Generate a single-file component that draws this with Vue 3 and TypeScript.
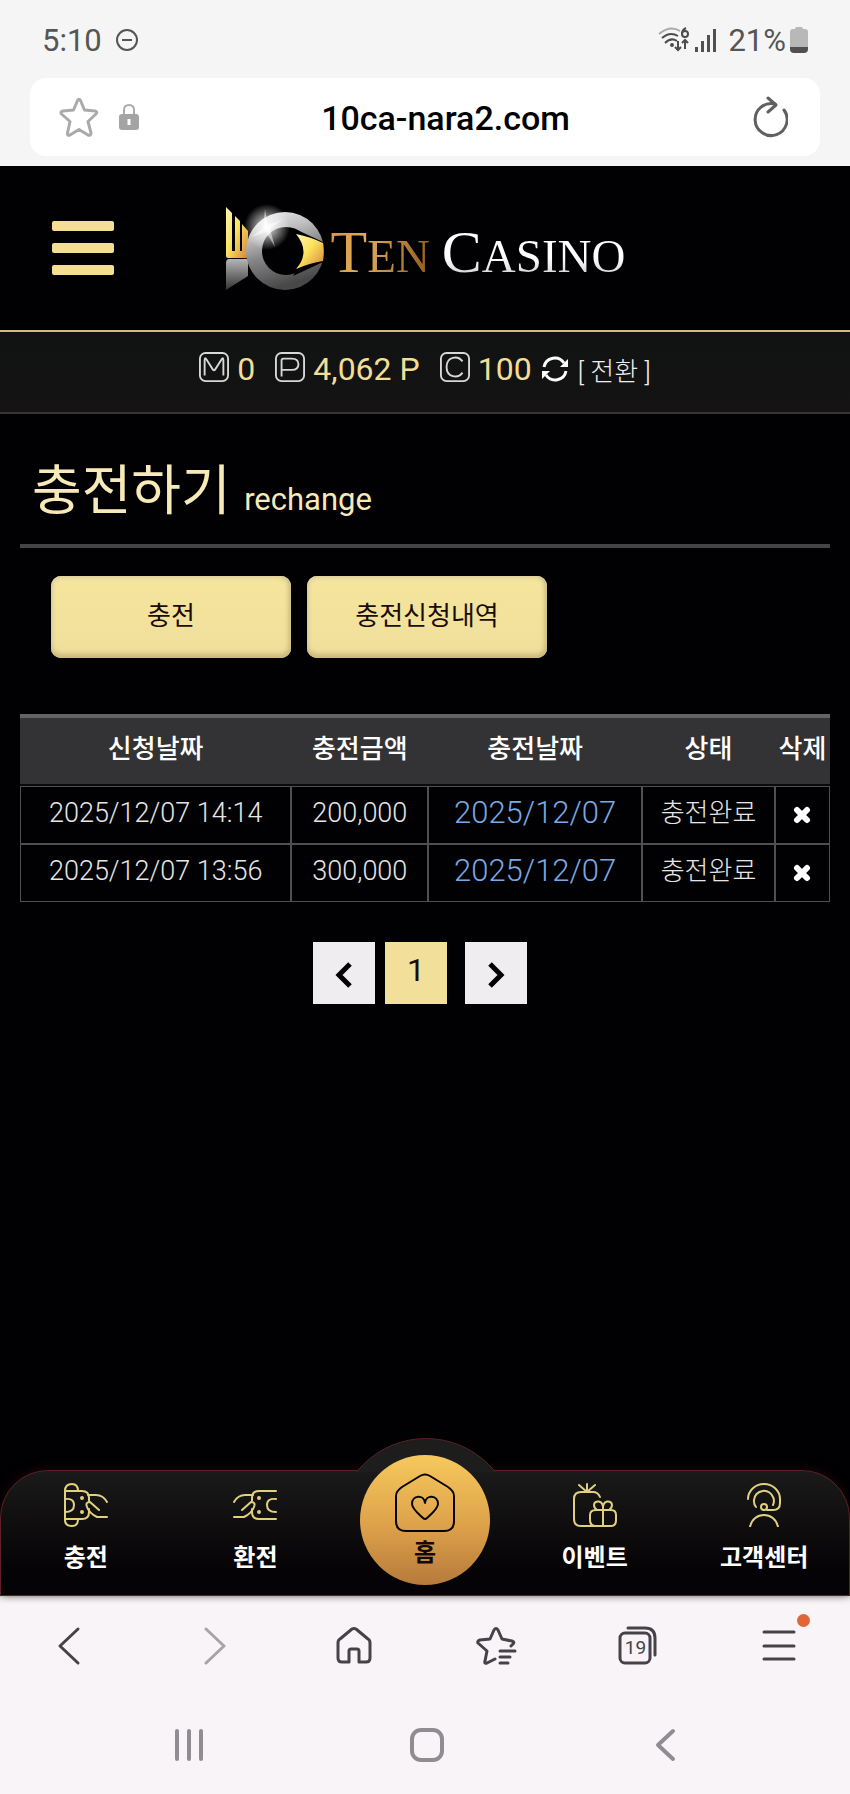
<script setup lang="ts">
import { ref } from 'vue'

interface Deposit {
  requested: string
  amount: string
  credited: string
  status: string
}

const address = ref('10ca-nara2.com')

const balances = [
  { key: 'M', value: '0', label: '머니', glyph: 'M6 25V9Q6 5 8 8L15 19Q16 20 17 19L24 8Q26 5 26 9V25' },
  { key: 'P', value: '4,062 P', label: '포인트', glyph: 'M7 26V9Q7 7 9 7H18Q25 7 25 13Q25 19 18 19H8' },
  { key: 'C', value: '100', label: '콤프', glyph: 'M24 10C19 3 7 5 7 16C7 27 19 29 24 22' },
]

const columns = ['신청날짜', '충전금액', '충전날짜', '상태', '삭제']

const deposits = ref<Deposit[]>([
  { requested: '2025/12/07 14:14', amount: '200,000', credited: '2025/12/07', status: '충전완료' },
  { requested: '2025/12/07 13:56', amount: '300,000', credited: '2025/12/07', status: '충전완료' },
])

function removeDeposit(index: number): void {
  deposits.value.splice(index, 1)
}
</script>

<template>
  <div class="phone">
    <div class="status">
      <div class="status-group">
        <span>5:10</span>
        <svg class="dnd" width="24" height="24" viewBox="0 0 24 24" fill="none" stroke="#555" stroke-width="2">
          <circle cx="12" cy="12" r="10" /><path d="M7 12h10" />
        </svg>
      </div>
      <div class="status-group right">
        <svg width="32" height="26" viewBox="0 0 32 26" fill="none" stroke="#4c4c4c" stroke-width="2">
          <path d="M1 7Q12-2 22 4" stroke="#aaa" />
          <path d="M4 11Q12 4 20 9M7 16Q13 10 19 14" />
          <circle cx="14" cy="18" r="1" fill="#4c4c4c" />
          <path d="M20 14v9m-3-3l3 3 3-3M27 22v-9m-3 3l3-3 3 3" />
          <path d="M28 1Q24 3 24 7" /><circle cx="27" cy="7" r="3" />
        </svg>
        <svg width="24" height="24" viewBox="0 0 24 24" fill="#505050">
          <rect x="1" y="19" width="3" height="5" /><rect x="7" y="13" width="3" height="11" />
          <rect x="13" y="7" width="3" height="17" /><rect x="19" y="1" width="3" height="23" />
        </svg>
        <span class="percent">21%</span>
        <svg width="18" height="26" viewBox="0 0 18 26">
          <path d="M5 2Q5 0 7 0h4q2 0 2 2h2q3 0 3 3v16H0V5q0-3 3-3z" fill="#b8b8b8" />
          <path d="M0 20h18v2q0 4-4 4H4q-4 0-4-4z" fill="#505050" />
        </svg>
      </div>
    </div>

    <div class="address-row">
      <div class="address">
        <button type="button" aria-label="즐겨찾기">
          <svg width="40" height="40" viewBox="0 0 40 40" fill="none" stroke="#aaa" stroke-width="3" stroke-linejoin="round">
            <path d="M18.500 3.500Q20 1 21.500 3.500L25.500 13L36 14Q39 15 37 17L29 24.500L32 36Q32 39 29 38L20 32.500L11 38Q8 39 8.500 36L11 24.500L2.500 17Q1 15 4 14L14.500 13Z" />
          </svg>
        </button>
        <svg class="lock" width="20" height="26" viewBox="0 0 20 26">
          <path d="M5 12V6q0-5 5-5t5 5v6" fill="none" stroke="#aaa" stroke-width="2" />
          <rect y="10" width="20" height="16" rx="3" fill="#a4a4a4" />
          <path d="M10 15v6" stroke="#fff" stroke-width="3" />
        </svg>
        <input v-model="address" type="text" aria-label="주소" />
        <button type="button" aria-label="새로고침">
          <svg width="36" height="42" viewBox="0 0 36 42" fill="none" stroke="#606060" stroke-width="3" stroke-linecap="round" stroke-linejoin="round">
            <path d="M32 14A16 16 0 1 1 23 8" /><path d="M16 2l8 7-8 7" />
          </svg>
        </button>
      </div>
    </div>

    <div class="site">
      <header class="site-header">
        <button class="menu" type="button" aria-label="메뉴"><i></i><i></i><i></i></button>
        <a class="logo" href="#" aria-label="Ten Casino">
          <svg width="100" height="90" viewBox="0 0 100 90">
            <defs>
              <linearGradient id="gold" x1="0" y1="0" x2="1" y2="1">
                <stop offset="0" stop-color="#fff6b0" /><stop offset=".45" stop-color="#fbe45d" /><stop offset="1" stop-color="#d6823b" />
              </linearGradient>
              <linearGradient id="steel" x1="0" y1="0" x2=".3" y2="1">
                <stop offset="0" stop-color="#efefef" /><stop offset=".35" stop-color="#bcbcbc" />
                <stop offset=".6" stop-color="#858585" /><stop offset="1" stop-color="#484848" />
              </linearGradient>
              <linearGradient id="base" x1="0" y1="0" x2="0" y2="1">
                <stop offset="0" stop-color="#b5b5b5" /><stop offset="1" stop-color="#333" />
              </linearGradient>
              <radialGradient id="flare">
                <stop offset="0" stop-color="#fff" /><stop offset=".25" stop-color="#fff" stop-opacity=".7" />
                <stop offset="1" stop-color="#fff" stop-opacity="0" />
              </radialGradient>
            </defs>
            <path d="M1 4L7 10V48H10V13L15 18V48H17V21L23 28V53Q22 56 19 55H3Q1 55 1 53Z" fill="url(#gold)" />
            <path d="M1 60Q1 56 4 56H23V73L1 87Z" fill="url(#base)" />
            <circle cx="60" cy="48" r="39" fill="url(#steel)" />
            <circle cx="61" cy="48" r="24" fill="#010103" />
            <path d="M68 25L98 39V59L68 73Q86 48 68 25Z" fill="#010103" />
            <path d="M71 31Q86 34 98 40Q99 50 98 58Q85 60 71 66Q86 49 71 31Z" fill="url(#gold)" />
            <circle cx="42" cy="24" r="23" fill="url(#flare)" />
            <path d="M40 6L43 22L58 16L45 26L50 44L41 29L26 34L38 25Z" fill="#fff" opacity=".5" />
          </svg>
          <span class="wordmark"><span class="ten">T<small>EN</small></span><span class="casino">C<small>ASINO</small></span></span>
        </a>
      </header>

      <div class="balances">
        <span v-for="b in balances" :key="b.key" class="balance">
          <svg width="30" height="30" viewBox="0 0 32 32" fill="none" stroke="#d8d8d8" stroke-width="2" role="img" :aria-label="b.label">
            <rect x="1" y="1" width="30" height="30" rx="6" /><path :d="b.glyph" />
          </svg>
          <b>{{ b.value }}</b>
        </span>
        <button class="convert" type="button">
          <svg width="26" height="26" viewBox="0 0 26 26" fill="none" stroke="#fff" stroke-width="3">
            <path d="M2 11A11 11 0 0 1 22 7M24 15A11 11 0 0 1 4 19" />
            <path d="M26 3v8h-8zM0 23v-8h8z" fill="#fff" stroke="none" />
          </svg>
          <span>[ 전환 ]</span>
        </button>
      </div>

      <main>
        <h1>충전하기 <small>rechange</small></h1>

        <div class="tabs">
          <button type="button">충전</button>
          <button type="button">충전신청내역</button>
        </div>

        <table>
          <colgroup><col class="c1" /><col class="c2" /><col class="c3" /><col class="c4" /><col class="c5" /></colgroup>
          <thead>
            <tr><th v-for="c in columns" :key="c" scope="col">{{ c }}</th></tr>
          </thead>
          <tbody>
            <tr v-for="(d, i) in deposits" :key="d.requested">
              <td>{{ d.requested }}</td>
              <td>{{ d.amount }}</td>
              <td class="credited">{{ d.credited }}</td>
              <td class="state">{{ d.status }}</td>
              <td>
                <button class="remove" type="button" aria-label="삭제" @click="removeDeposit(i)">
                  <svg width="18" height="18" viewBox="0 0 18 18" stroke="#fff" stroke-width="6" stroke-linecap="round">
                    <path d="M4 4l10 10M14 4L4 14" />
                  </svg>
                </button>
              </td>
            </tr>
          </tbody>
        </table>

        <nav class="pages" aria-label="페이지">
          <button type="button" aria-label="이전">
            <svg width="18" height="26" viewBox="0 0 18 26" fill="none" stroke="#000" stroke-width="5"><path d="M15 2L4 13l11 11" /></svg>
          </button>
          <button class="current" type="button" aria-current="page">1</button>
          <button class="next" type="button" aria-label="다음">
            <svg width="18" height="26" viewBox="0 0 18 26" fill="none" stroke="#000" stroke-width="5"><path d="M3 2l11 11L3 24" /></svg>
          </button>
        </nav>
      </main>

      <nav class="dock" aria-label="주 메뉴">
        <div class="bump"></div>
        <a href="#">
          <svg class="line" width="44" height="44" viewBox="0 0 44 44">
            <path d="M1 8V37Q1 43 8 43Q14 43 14 36M1 8Q1 1 8 1Q14 1 14 8M1 8H18Q25 8 25 15V18M1 36H18Q25 36 25 29V26" />
            <path d="M1 16Q10 15 10 22Q10 29 1 29" />
            <circle cx="18" cy="15" r="1" /><circle cx="18" cy="29" r="1" />
            <path d="M24 12H32Q39 12 43 19M35 27L26 19Q21 19 23 24Q25 30 33 34H43" />
          </svg>
          <span>충전</span>
        </a>
        <a href="#">
          <svg class="line" width="44" height="44" viewBox="0 0 44 44">
            <path d="M43 8H26Q19 8 19 15V18M43 36H26Q19 36 19 29V26M43 16Q34 15 34 22Q34 29 43 29" />
            <circle cx="26" cy="15" r="1" /><circle cx="26" cy="29" r="1" />
            <path d="M20 12H12Q5 12 1 19M9 27L18 19Q23 19 21 24Q19 30 11 34H1" />
          </svg>
          <span>환전</span>
        </a>
        <a class="home" href="#">
          <svg width="60" height="60" viewBox="0 0 60 60" fill="none" stroke="#080400" stroke-width="2" stroke-linejoin="round">
            <path d="M25 3Q30 0 35 3L53 14Q59 18 59 23V48Q59 58 49 58H11Q1 58 1 48V23Q1 18 7 14Z" />
            <path d="M30 30C29 21 17 22 17 31C17 36 25 42 28 45Q30 47 32 45C35 42 43 36 43 31C43 22 31 21 30 30Z" />
          </svg>
          <span>홈</span>
        </a>
        <a href="#">
          <svg class="line" width="44" height="44" viewBox="0 0 44 44">
            <path d="M14 9V1M14 9L6 2M14 9L22 2" />
            <path d="M27 14Q25 9 20 9H8Q1 9 1 16V36Q1 43 8 43H38Q43 43 43 37V32Q43 27 38 27H23Q17 27 17 32V37Q17 43 23 43M30 27V43" />
            <path d="M30 27C31 16 21 17 21 22Q21 25 24 27M30 27C29 16 39 17 39 22Q39 25 36 27" />
          </svg>
          <span>이벤트</span>
        </a>
        <a href="#">
          <svg class="line" width="44" height="44" viewBox="0 0 44 44">
            <path d="M6 16C6 8 13 1 22 1C31 1 38 8 38 16V20Q38 27 31 27H25" />
            <path d="M14 24A10 10 0 1 1 31 22M8 44C11 28 33 28 36 44" />
            <circle cx="22" cy="24" r="3" />
          </svg>
          <span>고객센터</span>
        </a>
      </nav>
    </div>

    <div class="browser-bar">
      <button type="button" aria-label="뒤로">
        <svg class="bar-icon" width="42" height="42" viewBox="0 0 42 42"><path d="M28 4L10 21l18 17" /></svg>
      </button>
      <button type="button" class="faded" aria-label="앞으로">
        <svg class="bar-icon" width="42" height="42" viewBox="0 0 42 42"><path d="M15 4l18 17-18 17" /></svg>
      </button>
      <button type="button" aria-label="홈">
        <svg class="bar-icon" width="42" height="42" viewBox="0 0 42 42">
          <path d="M19 4Q21 3 23 4L35 14Q37 15 37 18V33Q37 37 33 37H26V26Q26 24 24 24H18Q16 24 16 26V37H9Q5 37 5 33V18Q5 15 7 14Z" />
        </svg>
      </button>
      <button type="button" aria-label="북마크">
        <svg class="bar-icon" width="42" height="42" viewBox="0 0 42 42">
          <path d="M20 34L12 38Q9 39 10 36L12 26L3 18Q2 16 5 15L15 14L19 5Q21 2 23 5L27 14L37 16Q40 17 38 19L36 21M25 26H40M25 32H35M25 38H33" />
        </svg>
      </button>
      <button type="button" aria-label="탭" class="tab-count">
        <svg class="bar-icon" width="42" height="42" viewBox="0 0 42 42">
          <rect x="4" y="8" width="30" height="30" rx="5" /><path d="M12 3H29Q39 3 39 13V30" />
        </svg>
        <span>19</span>
      </button>
      <button type="button" aria-label="더보기" class="more">
        <svg class="bar-icon" width="42" height="42" viewBox="0 0 42 42"><path d="M6 7h30M6 21h30M6 34h30" /></svg>
        <i></i>
      </button>
    </div>

    <div class="system-bar">
      <button type="button" aria-label="최근 앱">
        <svg class="sys-icon" width="36" height="36" viewBox="0 0 36 36"><path d="M6 4v28M18 4v28M30 4v28" /></svg>
      </button>
      <button type="button" aria-label="홈 화면">
        <svg class="sys-icon" width="36" height="36" viewBox="0 0 36 36"><rect x="3" y="3" width="30" height="30" rx="9" /></svg>
      </button>
      <button type="button" aria-label="이전 화면">
        <svg class="sys-icon" width="36" height="36" viewBox="0 0 36 36"><path d="M26 4L11 18l15 14" /></svg>
      </button>
    </div>
  </div>
</template>

<style>
body {
  margin: 0;
  background: #000;
}
</style>

<style scoped>
* {
  box-sizing: border-box;
}

.phone {
  display: flex;
  flex-direction: column;
  min-height: 100vh;
  font-family: Roboto, "Noto Sans CJK KR", sans-serif;
  background: #f5f5f5;
}

button {
  padding: 0;
  border: 0;
  background: none;
  font: inherit;
  color: inherit;
}

a {
  color: inherit;
  text-decoration: none;
}

svg {
  display: block;
  flex: none;
}

.status {
  display: flex;
  justify-content: space-between;
  height: 78px;
  padding: 2px 42px 0;
  font-size: 31px;
  color: #555;
}

.status-group {
  display: flex;
  align-items: center;
  gap: 13px;
}

.status-group.right {
  gap: 4px;
}

.percent {
  margin-left: 6px;
}

.address-row {
  padding: 0 30px 10px;
}

.address {
  display: flex;
  align-items: center;
  height: 78px;
  padding: 0 32px 0 29px;
  border-radius: 16px;
  background: #fff;
}

.lock {
  margin-left: 20px;
}

.address input {
  flex: 1;
  min-width: 0;
  padding: 2px 0 0;
  border: 0;
  background: none;
  font: 500 34px Roboto, sans-serif;
  text-align: center;
  color: #000;
}

.site {
  display: flex;
  flex: 1;
  flex-direction: column;
  background: #010103;
}

.site-header {
  display: grid;
  grid-template-columns: 1fr auto 1fr;
  align-items: center;
  height: 166px;
  padding: 0 52px;
  border-bottom: 2px solid #cfbb85;
}

.menu {
  display: flex;
  flex-direction: column;
  gap: 12px;
  width: 62px;
}

.menu i {
  height: 10px;
  border-radius: 2px;
  background: #f3de93;
}

.logo {
  display: flex;
  align-items: center;
  gap: 6px;
}

.wordmark {
  display: flex;
  gap: 12px;
  padding-top: 12px;
  font-family: "Liberation Serif", serif;
  font-size: 60px;
  line-height: 68px;
}

.wordmark small {
  font-size: 47px;
}

.ten,
.casino {
  background: linear-gradient(100deg, #d99a43 10%, #e0ae5c 35%, #9a6422 90%);
  background-clip: text;
  color: transparent;
}

.casino {
  background-image: linear-gradient(#fff 55%, #aaa);
}

.balances {
  display: flex;
  align-items: center;
  justify-content: center;
  gap: 20px;
  height: 82px;
  padding-bottom: 6px;
  border-bottom: 2px solid #363636;
  background: linear-gradient(#101212, #151314);
}

.balance {
  display: flex;
  align-items: center;
  gap: 8px;
}

.balance svg {
  margin-bottom: 4px;
}

.balance b {
  font-size: 32px;
  font-weight: 400;
  line-height: 40px;
  color: #f1df96;
}

.convert {
  display: flex;
  align-items: center;
  gap: 10px;
  margin-left: -10px;
  font-size: 26px;
  font-weight: 300;
  color: #eee;
}

main {
  flex: 1;
  padding: 34px 20px;
}

h1 {
  margin: 0;
  padding: 0 12px;
  border-bottom: 4px solid #444;
  font-size: 54px;
  font-weight: 400;
  line-height: 88px;
  color: #f7eab8;
}

h1 small {
  font-size: 31px;
}

.tabs {
  display: flex;
  gap: 16px;
  padding: 28px 31px 56px;
}

.tabs button {
  width: 240px;
  height: 82px;
  padding-bottom: 8px;
  border-radius: 10px;
  background: linear-gradient(#f6e59c, #f0df9c);
  box-shadow: inset 0 -4px 5px #c9b97c, inset -3px 0 4px #d6c78d, inset 2px 3px 4px #e9dca9;
  font-size: 26px;
  color: #1b0c08;
}

table {
  width: 100%;
  table-layout: fixed;
  border-spacing: 0;
  border-top: 4px solid #636365;
  color: #e6e6e6;
}

.c1 { width: 33.5%; }
.c2 { width: 16.9%; }
.c3 { width: 26.4%; }
.c4 { width: 16.4%; }
.c5 { width: 6.8%; }

th {
  height: 68px;
  padding: 0 0 4px;
  border-bottom: 2px solid #0a0a0a;
  background: #333335;
  font-size: 26px;
  font-weight: 500;
  line-height: 36px;
  white-space: nowrap;
  color: #fff;
}

td {
  height: 58px;
  padding: 0 0 4px;
  border: 1px solid #4f4f51;
  font-size: 27px;
  font-weight: 300;
  line-height: 36px;
  text-align: center;
  white-space: nowrap;
}

.credited {
  font-size: 31px;
  color: #79a8e3;
}

.state {
  font-size: 26px;
}

.remove {
  display: block;
  margin: 4px auto 0;
}

.pages {
  display: flex;
  justify-content: center;
  gap: 10px;
  margin: 40px 10px 0 0;
}

.pages button {
  display: flex;
  align-items: center;
  justify-content: center;
  width: 62px;
  height: 62px;
  padding-top: 4px;
  background: #efedf0;
  font-size: 32px;
  color: #1b0c08;
}

.pages .current {
  padding: 0 0 6px;
  background: #f1df9a;
}

.pages .next {
  margin-left: 8px;
}

.dock {
  position: relative;
  display: grid;
  grid-template-columns: repeat(5, 1fr);
  height: 126px;
  border: 1px solid #5a2226;
  border-radius: 48px 48px 0 0;
  background: linear-gradient(#1b1a1a, #050305 80%);
  box-shadow: 0 -2px 10px #1c0607;
}

.bump {
  position: absolute;
  top: -33px;
  left: calc(50% - 70px);
  width: 140px;
  height: 34px;
  overflow: hidden;
}

.bump::before {
  content: "";
  display: block;
  width: 176px;
  height: 176px;
  margin-left: -18px;
  border: 1px solid #5a2226;
  border-radius: 50%;
  background: #1d1d1d;
}

.dock a {
  display: flex;
  flex-direction: column;
  align-items: center;
  gap: 13px;
  padding-top: 12px;
  font-size: 24px;
  font-weight: 700;
  line-height: 36px;
  color: #fff;
}

.line {
  fill: none;
  stroke: #e0d080;
  stroke-width: 2;
  stroke-linecap: round;
}

.dock .home {
  position: relative;
  justify-self: center;
  gap: 2px;
  width: 130px;
  height: 130px;
  margin-top: -16px;
  padding-top: 18px;
  border-radius: 50%;
  background: linear-gradient(#f6c95d, #dda14a 55%, #b67a3c);
  color: #140a04;
}

.browser-bar {
  display: grid;
  grid-template-columns: repeat(6, 1fr);
  height: 99px;
  background: #f8f4f8;
}

.browser-bar button,
.system-bar button {
  display: flex;
  align-items: center;
  justify-content: center;
  position: relative;
}

.bar-icon {
  fill: none;
  stroke: #474247;
  stroke-width: 3;
  stroke-linecap: round;
  stroke-linejoin: round;
}

.faded {
  opacity: .45;
}

.tab-count span {
  position: absolute;
  top: 42px;
  left: calc(50% - 14px);
  width: 24px;
  font-size: 19px;
  line-height: 20px;
  color: #474247;
}

.more i {
  position: absolute;
  top: 18px;
  left: calc(50% + 18px);
  width: 13px;
  height: 13px;
  border-radius: 50%;
  background: #df6737;
}

.system-bar {
  display: grid;
  grid-template-columns: repeat(3, 1fr);
  height: 99px;
  padding: 0 66px 0 70px;
  background: #f8f4f8;
}

.sys-icon {
  fill: none;
  stroke: #918c92;
  stroke-width: 4;
  stroke-linecap: round;
  stroke-linejoin: round;
}
</style>
